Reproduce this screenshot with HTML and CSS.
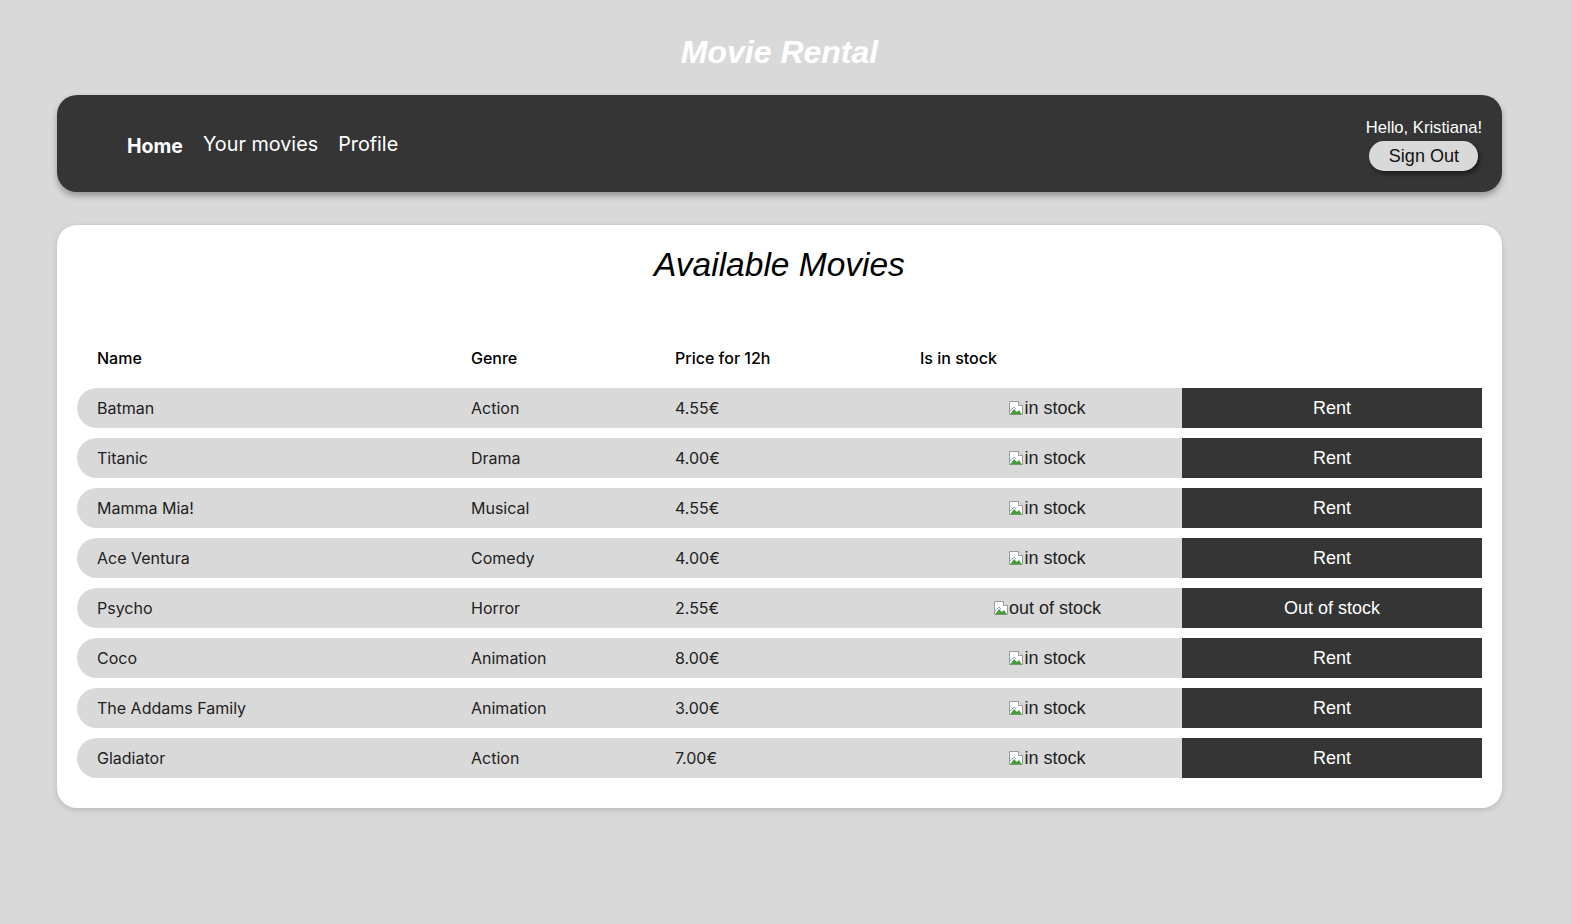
FILE: index.html
```html
<!DOCTYPE html>
<html>
<head>
<meta charset="utf-8">
<title>Movie Rental</title>
<link rel="stylesheet" href="styles.css">
</head>
<body>
<div class="page">
<h1 class="site-title">Movie Rental</h1>
<nav class="navbar">
  <div class="nav-links">
    <a class="nav-link active" href="#">Home</a>
    <a class="nav-link" href="#">Your movies</a>
    <a class="nav-link" href="#">Profile</a>
  </div>
  <div class="nav-user">
    <div class="greeting">Hello, Kristiana!</div>
    <button class="signout">Sign Out</button>
  </div>
</nav>
<main class="card">
  <h2 class="card-title">Available Movies</h2>
  <table class="movies">
    <colgroup>
      <col class="c-name"><col class="c-genre"><col class="c-price"><col class="c-stock"><col class="c-action">
    </colgroup>
    <thead>
      <tr><th>Name</th><th>Genre</th><th>Price for 12h</th><th>Is in stock</th><th></th></tr>
    </thead>
    <tbody>
      <tr><td>Batman</td><td>Action</td><td>4.55€</td><td class="stock"><span class="broken"><svg class="bi" viewBox="0 0 16 16"><path d="M1.5 1.5h9l4 4v9h-13z" fill="#fff" stroke="#9a9a9a"/><path d="M10.5 1.5v4h4" fill="#e8e8e8" stroke="#9a9a9a"/><path d="M2 14.5 L6 9 L9 12 L11 10 L14 14.5z" fill="#4a9a3c"/><path d="M2 11 L6 7 L8 9" fill="none" stroke="#7fb0de"/></svg>in stock</span></td><td class="action"><button class="rent">Rent</button></td></tr>
      <tr><td>Titanic</td><td>Drama</td><td>4.00€</td><td class="stock"><span class="broken"><svg class="bi" viewBox="0 0 16 16"><path d="M1.5 1.5h9l4 4v9h-13z" fill="#fff" stroke="#9a9a9a"/><path d="M10.5 1.5v4h4" fill="#e8e8e8" stroke="#9a9a9a"/><path d="M2 14.5 L6 9 L9 12 L11 10 L14 14.5z" fill="#4a9a3c"/><path d="M2 11 L6 7 L8 9" fill="none" stroke="#7fb0de"/></svg>in stock</span></td><td class="action"><button class="rent">Rent</button></td></tr>
      <tr><td>Mamma Mia!</td><td>Musical</td><td>4.55€</td><td class="stock"><span class="broken"><svg class="bi" viewBox="0 0 16 16"><path d="M1.5 1.5h9l4 4v9h-13z" fill="#fff" stroke="#9a9a9a"/><path d="M10.5 1.5v4h4" fill="#e8e8e8" stroke="#9a9a9a"/><path d="M2 14.5 L6 9 L9 12 L11 10 L14 14.5z" fill="#4a9a3c"/><path d="M2 11 L6 7 L8 9" fill="none" stroke="#7fb0de"/></svg>in stock</span></td><td class="action"><button class="rent">Rent</button></td></tr>
      <tr><td>Ace Ventura</td><td>Comedy</td><td>4.00€</td><td class="stock"><span class="broken"><svg class="bi" viewBox="0 0 16 16"><path d="M1.5 1.5h9l4 4v9h-13z" fill="#fff" stroke="#9a9a9a"/><path d="M10.5 1.5v4h4" fill="#e8e8e8" stroke="#9a9a9a"/><path d="M2 14.5 L6 9 L9 12 L11 10 L14 14.5z" fill="#4a9a3c"/><path d="M2 11 L6 7 L8 9" fill="none" stroke="#7fb0de"/></svg>in stock</span></td><td class="action"><button class="rent">Rent</button></td></tr>
      <tr><td>Psycho</td><td>Horror</td><td>2.55€</td><td class="stock"><span class="broken"><svg class="bi" viewBox="0 0 16 16"><path d="M1.5 1.5h9l4 4v9h-13z" fill="#fff" stroke="#9a9a9a"/><path d="M10.5 1.5v4h4" fill="#e8e8e8" stroke="#9a9a9a"/><path d="M2 14.5 L6 9 L9 12 L11 10 L14 14.5z" fill="#4a9a3c"/><path d="M2 11 L6 7 L8 9" fill="none" stroke="#7fb0de"/></svg>out of stock</span></td><td class="action"><button class="rent">Out of stock</button></td></tr>
      <tr><td>Coco</td><td>Animation</td><td>8.00€</td><td class="stock"><span class="broken"><svg class="bi" viewBox="0 0 16 16"><path d="M1.5 1.5h9l4 4v9h-13z" fill="#fff" stroke="#9a9a9a"/><path d="M10.5 1.5v4h4" fill="#e8e8e8" stroke="#9a9a9a"/><path d="M2 14.5 L6 9 L9 12 L11 10 L14 14.5z" fill="#4a9a3c"/><path d="M2 11 L6 7 L8 9" fill="none" stroke="#7fb0de"/></svg>in stock</span></td><td class="action"><button class="rent">Rent</button></td></tr>
      <tr><td>The Addams Family</td><td>Animation</td><td>3.00€</td><td class="stock"><span class="broken"><svg class="bi" viewBox="0 0 16 16"><path d="M1.5 1.5h9l4 4v9h-13z" fill="#fff" stroke="#9a9a9a"/><path d="M10.5 1.5v4h4" fill="#e8e8e8" stroke="#9a9a9a"/><path d="M2 14.5 L6 9 L9 12 L11 10 L14 14.5z" fill="#4a9a3c"/><path d="M2 11 L6 7 L8 9" fill="none" stroke="#7fb0de"/></svg>in stock</span></td><td class="action"><button class="rent">Rent</button></td></tr>
      <tr><td>Gladiator</td><td>Action</td><td>7.00€</td><td class="stock"><span class="broken"><svg class="bi" viewBox="0 0 16 16"><path d="M1.5 1.5h9l4 4v9h-13z" fill="#fff" stroke="#9a9a9a"/><path d="M10.5 1.5v4h4" fill="#e8e8e8" stroke="#9a9a9a"/><path d="M2 14.5 L6 9 L9 12 L11 10 L14 14.5z" fill="#4a9a3c"/><path d="M2 11 L6 7 L8 9" fill="none" stroke="#7fb0de"/></svg>in stock</span></td><td class="action"><button class="rent">Rent</button></td></tr>
    </tbody>
  </table>
</main>
</div>
</body>
</html>
```
FILE: styles.css
```css
* { box-sizing: border-box; }
html, body { margin: 0; padding: 0; }
body {
  background: #d9d9d9;
  font-family: Inter, "Liberation Sans", sans-serif;
}
.page {
  width: 1445px;
  margin-left: 57px;
  padding-bottom: 40px;
}
.site-title {
  margin: 0;
  padding-top: 35px;
  height: 95px;
  text-align: center;
  font-family: "Liberation Sans", Arial, sans-serif;
  font-style: italic;
  font-weight: bold;
  font-size: 32px;
  line-height: 35px;
  color: #fff;
}
.navbar {
  height: 97px;
  background: #353535;
  border-radius: 20px;
  box-shadow: 0 4px 6px rgba(0,0,0,0.3);
  display: flex;
  align-items: center;
  justify-content: space-between;
  padding: 0 20px 0 70px;
}
.nav-links { display: flex; align-items: center; gap: 20px; }
.nav-link {
  color: #fff;
  text-decoration: none;
  font-size: 19.8px;
  line-height: 24px;
}
.nav-link.active { font-weight: bold; font-size: 19.5px; position: relative; top: 2px; }
.nav-user {
  display: flex;
  flex-direction: column;
  align-items: center;
  gap: 4px;
  padding-top: 2px;
}
.greeting {
  color: #fff;
  font-family: "Liberation Sans", Arial, sans-serif;
  font-size: 16.6px;
  line-height: 19px;
}
.signout {
  width: 109px;
  height: 30px;
  border: none;
  border-radius: 15px;
  background: #d9d9d9;
  color: #111;
  font-family: "Liberation Sans", Arial, sans-serif;
  font-size: 18px;
  box-shadow: 2px 3px 4px rgba(0,0,0,0.45);
  padding: 0;
}
.card {
  margin-top: 33px;
  background: #fff;
  border-radius: 20px;
  box-shadow: 0 2px 6px rgba(0,0,0,0.15);
  padding: 21px 20px 20px;
}
.card-title {
  margin: 0 0 44px;
  text-align: center;
  font-family: "Liberation Sans", Arial, sans-serif;
  font-style: italic;
  font-weight: normal;
  font-size: 33.5px;
  line-height: 38px;
  color: #000;
}
.movies {
  width: 100%;
  border-collapse: separate;
  border-spacing: 0 10px;
  table-layout: fixed;
}
.c-name { width: 374px; }
.c-genre { width: 204px; }
.c-price { width: 245px; }
.c-stock { width: 282px; }
.c-action { width: 300px; }
.movies th {
  text-align: left;
  font-weight: 500;
  font-size: 16px;
  color: #000;
  height: 40px;
  padding: 0 20px;
}
.movies td {
  height: 40px;
  padding: 0 20px;
  background: #d9d9d9;
  font-size: 16px;
  color: #222;
}
.movies td:first-child { border-radius: 20px 0 0 20px; }
.movies td.stock { text-align: center; padding: 0 0 0 12px; }
.broken {
  font-family: "Liberation Sans", Arial, sans-serif;
  font-size: 18px;
  color: #222;
  display: inline-flex;
  align-items: center;
  position: relative;
  top: 1px;
}
.bi { width: 16px; height: 16px; }
.movies td.action { padding: 0; background: #353535; }
.rent {
  width: 100%;
  height: 40px;
  border: none;
  background: #353535;
  color: #fff;
  font-family: "Liberation Sans", Arial, sans-serif;
  font-size: 18px;
  padding: 0;
  display: block;
}
```
